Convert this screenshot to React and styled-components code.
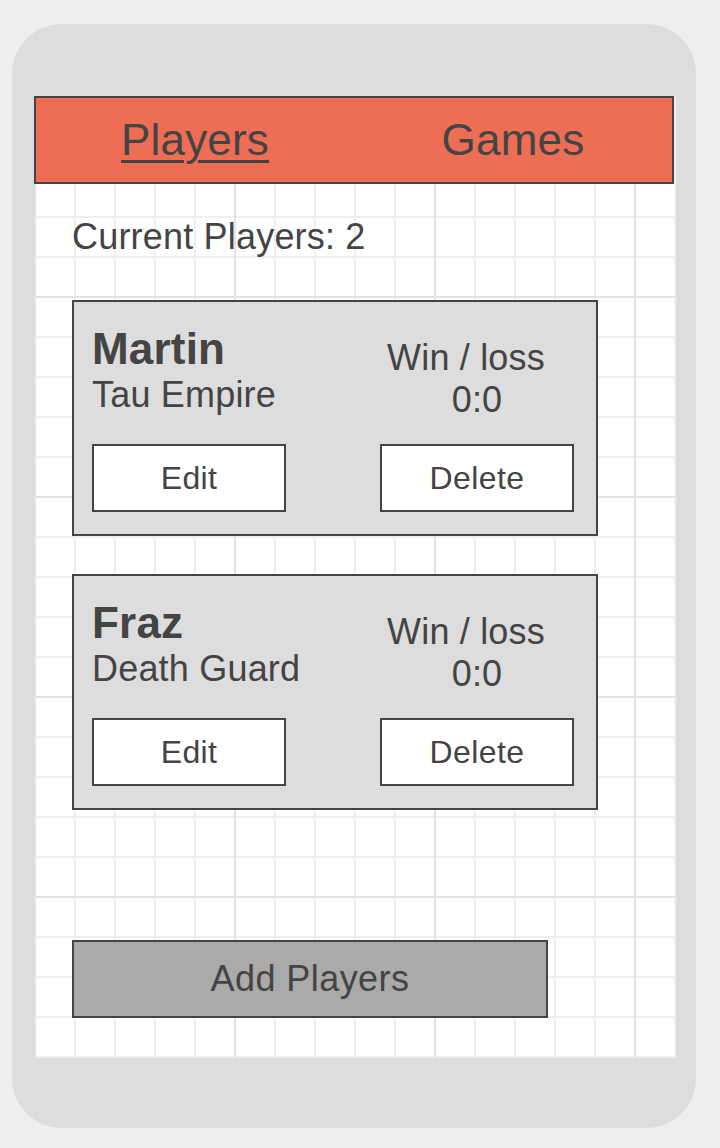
import React from 'react';
import styled, { createGlobalStyle } from 'styled-components';

const GlobalStyle = createGlobalStyle`
  html, body {
    margin: 0;
    padding: 0;
    background: #eeeeee;
  }
  body {
    font-family: "Liberation Sans", Arial, sans-serif;
    color: #444444;
    letter-spacing: 0.012em;
  }
  * {
    box-sizing: border-box;
  }
`;

const players = [
  { name: 'Martin', army: 'Tau Empire', wins: 0, losses: 0 },
  { name: 'Fraz', army: 'Death Guard', wins: 0, losses: 0 },
];

const Phone = styled.div`
  margin: 24px 0 0 12px;
  width: 684px;
  height: 1104px;
  border-radius: 50px;
  background: #dddddd;
  padding: 72px 20px 70px 22px;
`;

const Screen = styled.div`
  width: 642px;
  height: 962px;
  display: flex;
  flex-direction: column;
  background-color: #ffffff;
  background-image:
    linear-gradient(to right, #e3e3e3 2px, transparent 2px),
    linear-gradient(to bottom, #e3e3e3 2px, transparent 2px),
    linear-gradient(to right, #efefef 2px, transparent 2px),
    linear-gradient(to bottom, #efefef 2px, transparent 2px);
  background-size: 200px 200px, 200px 200px, 40px 40px, 40px 40px;
  background-position: 0 0, 0 0, 0 0, 0 0;
`;

const Header = styled.nav`
  width: 640px;
  height: 88px;
  display: flex;
  background: #ed6e54;
  border: 2px solid #444444;
`;

const Tab = styled.div`
  flex: 1;
  display: flex;
  align-items: center;
  justify-content: center;
  font-size: 44px;
  color: #444444;
  text-decoration: ${p => (p.$active ? 'underline' : 'none')};
  text-decoration-thickness: 3px;
  text-underline-offset: 5px;
`;

const Main = styled.main`
  padding: 32px 0 0 38px;
  display: flex;
  flex-direction: column;
`;

const Count = styled.div`
  font-size: 36px;
  line-height: 42px;
  margin-bottom: 42px;
`;

const CardList = styled.div`
  display: flex;
  flex-direction: column;
  gap: 38px;
`;

const Card = styled.div`
  width: 526px;
  height: 236px;
  background: #dddddd;
  border: 2px solid #444444;
  padding: 22px 22px 22px 18px;
  display: flex;
  flex-direction: column;
`;

const InfoRow = styled.div`
  height: 92px;
  display: flex;
  justify-content: space-between;
  align-items: flex-start;
`;

const Who = styled.div`
  display: flex;
  flex-direction: column;
`;

const Name = styled.div`
  font-size: 44px;
  font-weight: 700;
  line-height: 50px;
`;

const Army = styled.div`
  font-size: 36px;
  line-height: 42px;
`;

const Record = styled.div`
  width: 194px;
  padding-top: 13px;
  display: flex;
  flex-direction: column;
  align-items: center;
  font-size: 36px;
  line-height: 42px;
`;

const RecordLabel = styled.span`
  padding-right: 22px;
`;

const ButtonRow = styled.div`
  margin-top: 28px;
  display: flex;
  justify-content: space-between;
`;

const CardButton = styled.button`
  width: 194px;
  height: 68px;
  background: #ffffff;
  border: 2px solid #444444;
  font-family: inherit;
  font-size: 32px;
  letter-spacing: 0.012em;
  color: #444444;
  padding: 0;
`;

const AddButton = styled.button`
  margin-top: 130px;
  width: 476px;
  height: 78px;
  background: #aaaaaa;
  border: 2px solid #444444;
  font-family: inherit;
  font-size: 36px;
  letter-spacing: 0.012em;
  color: #444444;
  padding: 0;
`;

export default function App() {
  return (
    <>
      <GlobalStyle />
      <Phone>
        <Screen>
          <Header>
            <Tab $active>Players</Tab>
            <Tab>Games</Tab>
          </Header>
          <Main>
            <Count>Current Players: {players.length}</Count>
            <CardList>
              {players.map(p => (
                <Card key={p.name}>
                  <InfoRow>
                    <Who>
                      <Name>{p.name}</Name>
                      <Army>{p.army}</Army>
                    </Who>
                    <Record>
                      <RecordLabel>Win / loss</RecordLabel>
                      <span>{p.wins}:{p.losses}</span>
                    </Record>
                  </InfoRow>
                  <ButtonRow>
                    <CardButton>Edit</CardButton>
                    <CardButton>Delete</CardButton>
                  </ButtonRow>
                </Card>
              ))}
            </CardList>
            <AddButton>Add Players</AddButton>
          </Main>
        </Screen>
      </Phone>
    </>
  );
}
